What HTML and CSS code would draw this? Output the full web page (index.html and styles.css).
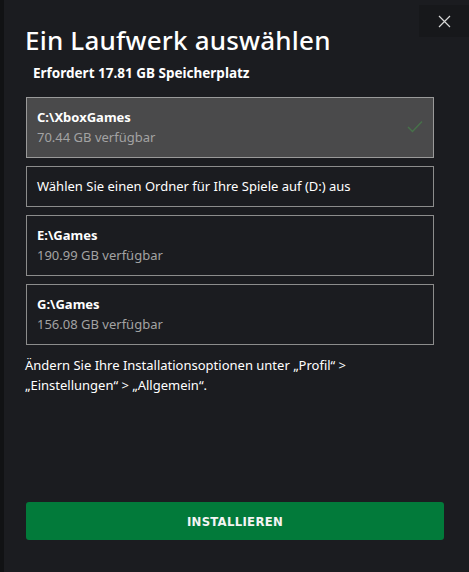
FILE: index.html
```html
<!DOCTYPE html>
<html lang="de">
<head>
    <meta charset="UTF-8">
    <meta name="viewport" content="width=device-width, initial-scale=1.0">
    <title>Ein Laufwerk auswählen</title>
    <link rel="stylesheet" href="styles.css">
</head>
<body>
    <div class="dialog">
        <button class="close" aria-label="Schließen">
            <svg width="13" height="13" viewBox="0 0 13 13">
                <path d="M1 1 L12 12 M12 1 L1 12" stroke="#d8d8d8" stroke-width="1.2" fill="none"/>
            </svg>
        </button>
        <h1>Ein Laufwerk auswählen</h1>
        <div class="required">Erfordert 17.81 GB Speicherplatz</div>
        <div class="drives">
            <div class="drive selected">
                <div class="drive-name">C:\XboxGames</div>
                <div class="drive-free">70.44 GB verfügbar</div>
                <svg class="check" width="16" height="13" viewBox="0 0 16 13">
                    <path d="M1 7 L5.5 11.5 L15 1.5" stroke="#47724a" stroke-width="1.4" fill="none"/>
                </svg>
            </div>
            <div class="drive single">
                <div class="drive-text">Wählen Sie einen Ordner für Ihre Spiele auf (D:) aus</div>
            </div>
            <div class="drive">
                <div class="drive-name">E:\Games</div>
                <div class="drive-free">190.99 GB verfügbar</div>
            </div>
            <div class="drive">
                <div class="drive-name">G:\Games</div>
                <div class="drive-free">156.08 GB verfügbar</div>
            </div>
        </div>
        <p class="hint">Ändern Sie Ihre Installationsoptionen unter „Profil“ &gt; „Einstellungen“ &gt; „Allgemein“.</p>
        <div class="spacer"></div>
        <button class="install">INSTALLIEREN</button>
    </div>
</body>
</html>
```
FILE: styles.css
```css
html, body {
    margin: 0;
    height: 100%;
}
body {
    font-family: "Noto Sans", "Open Sans", sans-serif;
    background-color: #1b1c20;
    color: #ffffff;
    border-left: 4px solid #111214;
    box-sizing: border-box;
}
.dialog {
    position: relative;
    height: 100%;
    box-sizing: border-box;
    padding: 22px 25px 32px 22px;
    display: flex;
    flex-direction: column;
}
.close {
    position: absolute;
    top: 5px;
    right: 0;
    width: 50px;
    height: 32px;
    background-color: #17181b;
    border: none;
    padding: 0;
    display: flex;
    align-items: center;
    justify-content: center;
}
h1 {
    margin: 0 0 0 -1px;
    font-size: 26px;
    font-weight: 500;
    line-height: 36px;
    letter-spacing: 0.2px;
}
.required {
    margin: 6px 0 0 7px;
    font-size: 13.5px;
    font-weight: 700;
    line-height: 18px;
}
.drives {
    margin-top: 15px;
    width: 408px;
    display: flex;
    flex-direction: column;
    gap: 8px;
}
.drive {
    position: relative;
    height: 61px;
    box-sizing: border-box;
    border: 1px solid #8c8c8c;
    padding: 10px 10px 0 10px;
}
.drive.selected {
    background-color: #4a4a4b;
    border-color: #9a9a9a;
}
.drive.single {
    height: 41px;
    padding-top: 10px;
}
.drive-name {
    font-size: 13px;
    font-weight: 700;
    line-height: 19px;
}
.drive-free {
    font-size: 13px;
    line-height: 20px;
    color: #a3a3a3;
}
.drive-text {
    font-size: 13px;
    line-height: 19px;
}
.check {
    position: absolute;
    right: 10px;
    top: 22px;
}
.hint {
    margin: 10px 0 0 -1px;
    width: 390px;
    font-size: 13px;
    line-height: 20px;
}
.spacer {
    flex: 1;
}
.install {
    width: 418px;
    height: 38px;
    background-color: #027a3a;
    color: #f4f4f4;
    border: none;
    border-radius: 3px;
    font-family: "DejaVu Sans Condensed", "Liberation Sans Narrow", sans-serif;
    font-weight: 700;
    font-size: 13px;
    letter-spacing: 0.3px;
}
```
